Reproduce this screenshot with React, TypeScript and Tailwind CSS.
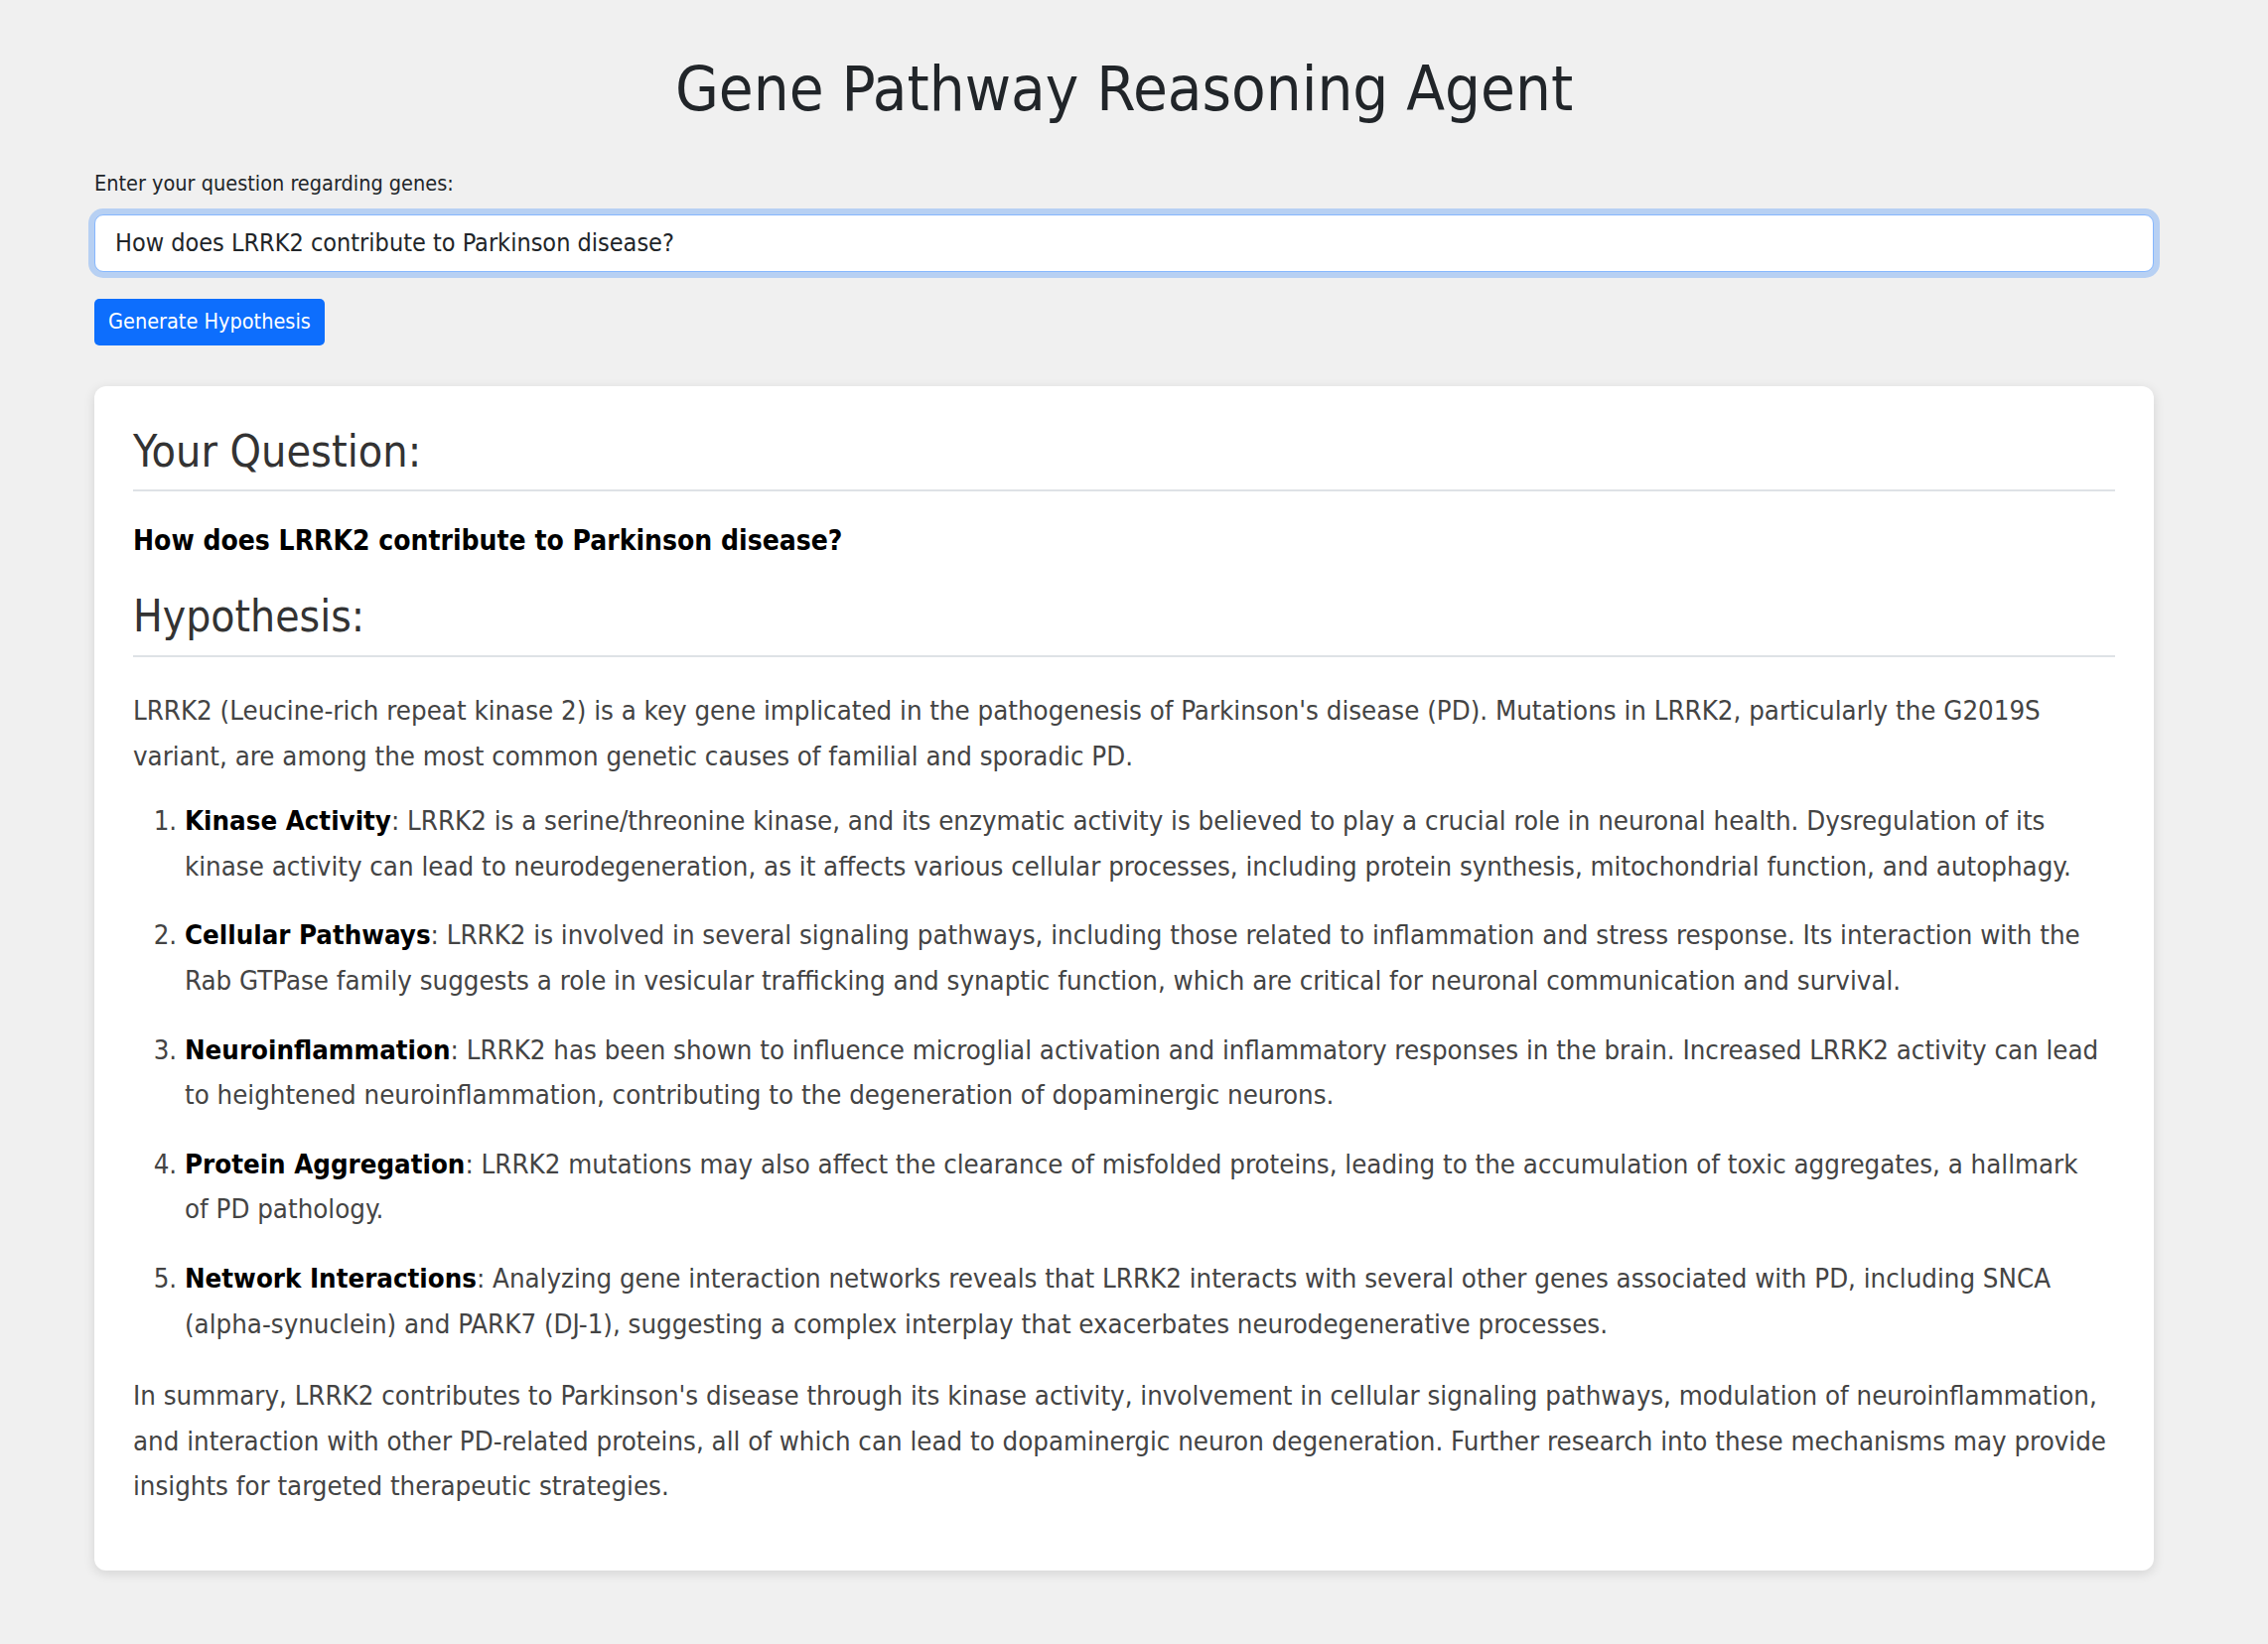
import { useState } from "react";

const QUESTION = "How does LRRK2 contribute to Parkinson disease?";

const findings = [
  {
    title: "Kinase Activity",
    text: "LRRK2 is a serine/threonine kinase, and its enzymatic activity is believed to play a crucial role in neuronal health. Dysregulation of its kinase activity can lead to neurodegeneration, as it affects various cellular processes, including protein synthesis, mitochondrial function, and autophagy.",
  },
  {
    title: "Cellular Pathways",
    text: "LRRK2 is involved in several signaling pathways, including those related to inflammation and stress response. Its interaction with the Rab GTPase family suggests a role in vesicular trafficking and synaptic function, which are critical for neuronal communication and survival.",
  },
  {
    title: "Neuroinflammation",
    text: "LRRK2 has been shown to influence microglial activation and inflammatory responses in the brain. Increased LRRK2 activity can lead to heightened neuroinflammation, contributing to the degeneration of dopaminergic neurons.",
  },
  {
    title: "Protein Aggregation",
    text: "LRRK2 mutations may also affect the clearance of misfolded proteins, leading to the accumulation of toxic aggregates, a hallmark\nof PD pathology.",
  },
  {
    title: "Network Interactions",
    text: "Analyzing gene interaction networks reveals that LRRK2 interacts with several other genes associated with PD, including SNCA (alpha-synuclein) and PARK7 (DJ-1), suggesting a complex interplay that exacerbates neurodegenerative processes.",
  },
];

export default function App() {
  const [question, setQuestion] = useState(QUESTION);

  return (
    <div className="min-h-screen bg-[#f0f0f0] pb-[70px] font-['DejaVu_Sans_Condensed','DejaVu_Sans',sans-serif] text-[#212529]">
      <div className="ml-[95px] w-[2074px] pt-[52px]">
        <h1 className="text-center text-[63px] leading-[1.2] font-normal">Gene Pathway Reasoning Agent</h1>

        <label className="mt-[41px] block text-[21.5px] leading-[1.5]">Enter your question regarding genes:</label>
        <input
          value={question}
          onChange={(e) => setQuestion(e.target.value)}
          className="mt-[15px] block h-[58px] w-full rounded-[9px] border border-[#86b7fe] bg-white px-[20px] text-[25px] text-[#212529] shadow-[0_0_0_6px_rgba(13,110,253,0.25)] outline-none"
        />

        <button className="mt-[27px] block h-[47px] rounded-[5px] bg-[#0d6efd] px-[14px] text-[21.5px] text-white">
          Generate Hypothesis
        </button>

        {/* result card */}
        <div className="mt-[41px] rounded-[12px] bg-white px-[39px] pt-[39px] pb-[62px] shadow-[0_3px_12px_rgba(0,0,0,0.12)]">
          <h3 className="border-b-2 border-[#dee2e6] pb-[12px] text-[44.5px] leading-[1.2] text-[#333]">Your Question:</h3>
          <p className="mt-[32px] text-[28px] leading-[36px] font-bold text-black">{QUESTION}</p>

          <h3 className="mt-[32px] border-b-2 border-[#dee2e6] pb-[12px] text-[44px] leading-[1.2] text-[#333]">Hypothesis:</h3>

          <div className="text-[27.4px] leading-[45.6px] text-[#444]">
            <p className="mt-[31px]">
              LRRK2 (Leucine-rich repeat kinase 2) is a key gene implicated in the pathogenesis of Parkinson's disease
              (PD). Mutations in LRRK2, particularly the G2019S variant, are among the most common genetic causes of
              familial and sporadic PD.
            </p>

            <ol className="mt-[20px] list-decimal pl-[52px]">
              {findings.map((f) => (
                <li key={f.title} className="mb-[24px] whitespace-pre-line">
                  <strong className="font-bold text-black">{f.title}</strong>: {f.text}
                </li>
              ))}
            </ol>

            <p className="mt-[27px]">
              In summary, LRRK2 contributes to Parkinson's disease through its kinase activity, involvement in cellular
              signaling pathways, modulation of neuroinflammation, and interaction with other PD-related proteins, all of
              which can lead to dopaminergic neuron degeneration. Further research into these mechanisms may provide
              insights for targeted therapeutic strategies.
            </p>
          </div>
        </div>
      </div>
    </div>
  );
}
